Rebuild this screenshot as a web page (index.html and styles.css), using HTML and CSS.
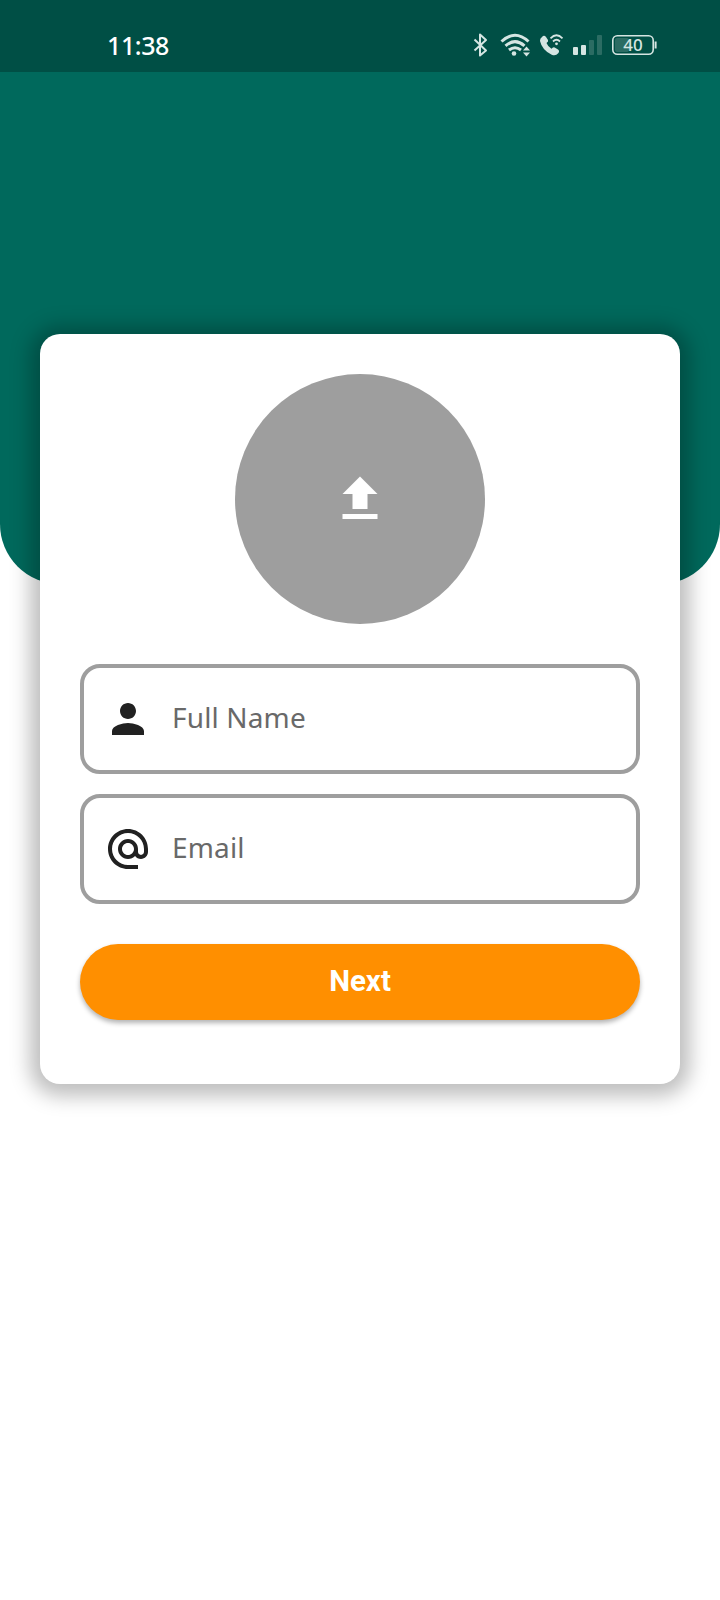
FILE: index.html
```html
<!DOCTYPE html>
<html lang="en">
<head>
<meta charset="utf-8">
<title>Profile</title>
<link rel="stylesheet" href="styles.css">
</head>
<body>
<div class="screen">
  <header class="hero">
    <div class="status">
      <span class="clock">11:38</span>
      <svg class="status-icons" width="190" height="32" viewBox="0 0 190 32" fill="none">
        <path d="M4.500 9.500 16 20.500 10 25.500V4.500L16 10 4.500 20.500" stroke="#d5e5e2" stroke-width="2" stroke-linejoin="round"/>
        <g stroke="#d5e5e2" stroke-width="3">
          <path d="M31.500 11.500Q45 -1 58.500 11.500"/>
          <path d="M35.500 15.800Q45 7.500 54.500 15.800"/>
          <path d="M39 20Q45 15.500 51 20"/>
        </g>
        <circle cx="44" cy="23.500" r="2.300" fill="#d5e5e2"/>
        <path d="M53 20.500h7l-3.500-4zM53 22.500h7l-3.500 4z" fill="#d5e5e2"/>
        <path d="M73 7q2-2.500 4 0l2 3q.8 1.500-1.500 3 1.500 4 5 5.700 1.500-2.200 3.200-1.300l3.300 2.200q2 1.500.2 3.700-2.400 3-6.500 1.500Q73 20 71 11q-.2-2.500 2-4z" fill="#d5e5e2" transform="translate(-1 0)"/>
        <g stroke="#d5e5e2" stroke-width="1.800">
          <path d="M80.500 8.300Q86.500 2.300 92.500 8.300"/>
          <path d="M83 11.500Q86.500 8 90 11.500"/>
        </g>
        <circle cx="86.500" cy="13.800" r="1.400" fill="#d5e5e2"/>
        <rect x="103" y="17" width="5" height="8" rx="1" fill="#d5e5e2"/>
        <rect x="111" y="15" width="5" height="10" rx="1" fill="#d5e5e2"/>
        <rect x="119" y="10" width="5" height="15" rx="1" fill="#2b6c63"/>
        <rect x="127" y="5" width="5" height="20" rx="1" fill="#2b6c63"/>
        <rect x="145" y="8" width="14" height="14" rx="2" fill="#2b6c63"/>
        <rect x="142.800" y="5.800" width="40.400" height="18.400" rx="4.500" stroke="#d5e5e2" stroke-width="1.600"/>
        <path d="M185.600 11.500v7" stroke="#d5e5e2" stroke-width="2"/>
        <text class="battery-text" x="163" y="21" text-anchor="middle">40</text>
      </svg>
    </div>
  </header>
  <main class="card">
    <button class="avatar" aria-label="Upload photo">
      <svg width="60" height="60" viewBox="0 0 24 24" fill="#fff"><path d="M5 20h14v-2H5v2zm0-10h4v6h6v-6h4l-7-7-7 7z"/></svg>
    </button>
    <div class="fields">
      <div class="field">
        <svg width="48" height="48" viewBox="0 0 24 24" fill="#212121"><path d="M12 12c2.210 0 4-1.790 4-4s-1.790-4-4-4-4 1.790-4 4 1.790 4 4 4zm0 2c-2.670 0-8 1.340-8 4v2h16v-2c0-2.660-5.330-4-8-4z"/></svg>
        <span class="label">Full Name</span>
      </div>
      <div class="field">
        <svg width="48" height="48" viewBox="0 0 24 24" fill="#212121"><path d="M12 2C6.480 2 2 6.480 2 12s4.480 10 10 10h5v-2h-5c-4.340 0-8-3.660-8-8s3.660-8 8-8 8 3.660 8 8v1.430c0 .79-.71 1.570-1.500 1.570s-1.500-.78-1.500-1.570V12c0-2.760-2.240-5-5-5s-5 2.240-5 5 2.240 5 5 5c1.380 0 2.640-.56 3.540-1.470.65.89 1.770 1.470 2.960 1.470 1.970 0 3.500-1.600 3.500-3.570V12c0-5.520-4.480-10-10-10zm0 13c-1.660 0-3-1.340-3-3s1.340-3 3-3 3 1.340 3 3-1.340 3-3 3z"/></svg>
        <span class="label">Email</span>
      </div>
    </div>
    <button class="next">Next</button>
  </main>
</div>
</body>
</html>
```

FILE: styles.css
```css
* { box-sizing: border-box; }
body { margin: 0; background: #fff; }
.screen { height: 1600px; overflow: hidden; }
.hero {
  height: 584px;
  background: #00695c;
  border-radius: 0 0 60px 60px;
}
.status {
  height: 72px;
  padding: 18px 60px 0 107px;
  display: flex;
  justify-content: space-between;
  align-items: flex-start;
  background: #004f45;
}
.clock {
  font: 500 25px/54px "Noto Sans", sans-serif;
  letter-spacing: -.4px;
  color: #fff;
}
.status-icons { display: block; margin-top: 12px; }
.battery-text { font: 500 17px "Noto Sans", sans-serif; fill: #d5e5e2; }
.card {
  position: relative;
  width: 640px;
  height: 750px;
  margin: -250px auto 0;
  padding: 40px;
  display: flex;
  flex-direction: column;
  align-items: center;
  gap: 40px;
  background: #fff;
  border-radius: 20px;
  box-shadow: 0 2px 20px 10px rgba(0, 0, 0, .26);
}
.avatar {
  width: 250px;
  height: 250px;
  padding: 0;
  display: grid;
  place-items: center;
  border: 0;
  border-radius: 50%;
  background: #9e9e9e;
}
.fields { width: 100%; display: grid; gap: 20px; }
.field {
  height: 110px;
  padding: 0 20px;
  display: flex;
  align-items: center;
  gap: 20px;
  border: 4px solid #9e9e9e;
  border-radius: 20px;
}
.label {
  padding-bottom: 4px;
  font: 400 28px/40px "Noto Sans", sans-serif;
  letter-spacing: .15px;
  color: #696969;
}
.next {
  width: 100%;
  height: 76px;
  border: 0;
  border-radius: 38px;
  background: #ff8f00;
  color: #fff;
  font: 700 29.5px/1 Roboto, sans-serif;
  box-shadow: 0 3px 5px rgba(0, 0, 0, .3);
}
```
